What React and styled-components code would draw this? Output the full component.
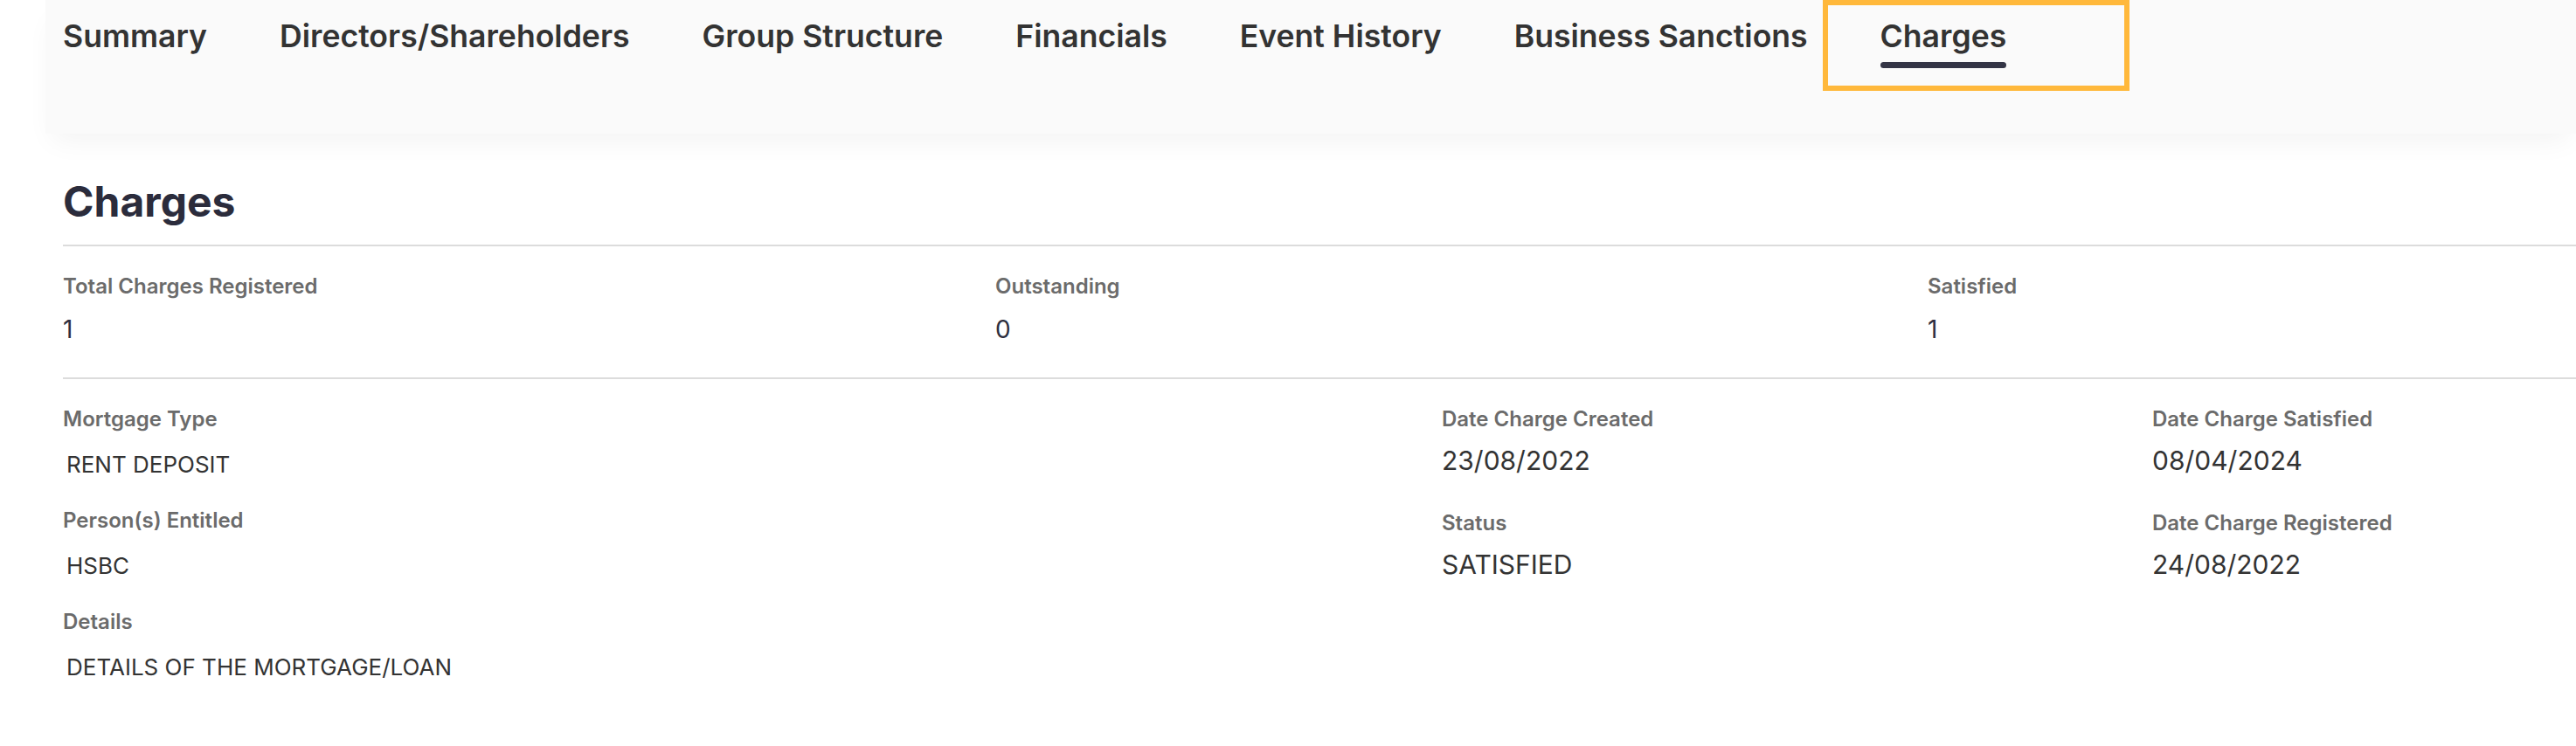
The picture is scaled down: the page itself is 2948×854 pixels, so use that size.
import styled, { createGlobalStyle } from "styled-components";

const GlobalStyle = createGlobalStyle`
    body {
        margin: 0;
        background: #ffffff;
        font-family: Inter, "Noto Sans", sans-serif;
        overflow: hidden;
    }
`;

const tabs = [
    "Summary",
    "Directors/Shareholders",
    "Group Structure",
    "Financials",
    "Event History",
    "Business Sanctions",
    "Charges",
];

const summary = [
    { label: "Total Charges Registered", value: "1" },
    { label: "Outstanding", value: "0" },
    { label: "Satisfied", value: "1" },
];

const detailColumns = [
    {
        wide: true,
        fields: [
            { label: "Mortgage Type", value: "RENT DEPOSIT" },
            { label: "Person(s) Entitled", value: "HSBC" },
            { label: "Details", value: "DETAILS OF THE MORTGAGE/LOAN" },
        ],
    },
    {
        fields: [
            { label: "Date Charge Created", value: "23/08/2022" },
            { label: "Status", value: "SATISFIED" },
        ],
    },
    {
        fields: [
            { label: "Date Charge Satisfied", value: "08/04/2024" },
            { label: "Date Charge Registered", value: "24/08/2022" },
        ],
    },
];

const Page = styled.div`
    margin-left: 52px;
    width: 2896px;
`;

const Header = styled.header`
    height: 153px;
    background: #fafafa;
    box-shadow: 0 16px 30px -8px rgba(0, 0, 0, 0.05);
    padding: 20px 20px 0;
    box-sizing: border-box;
    position: relative;
    z-index: 1;
`;

const TabList = styled.nav`
    display: flex;
    gap: 83px;
`;

const Tab = styled.div`
    position: relative;
    display: flex;
    flex-direction: column;
    font-size: 35.6px;
    line-height: 44px;
    font-weight: 600;
    color: #333333;
    white-space: nowrap;
`;

const Underline = styled.span`
    display: block;
    margin-top: 7px;
    height: 7px;
    border-radius: 4px;
    background: #343546;
`;

const Highlight = styled.span`
    position: absolute;
    left: -66px;
    top: -20px;
    width: 351px;
    height: 104px;
    box-sizing: border-box;
    border: 6px solid #ffb83b;
    pointer-events: none;
`;

const Content = styled.main`
    padding: 49px 0 0 20px;
`;

const Title = styled.h1`
    margin: 0;
    font-size: 48px;
    line-height: 58px;
    font-weight: 700;
    color: #2b2c3c;
`;

const Divider = styled.hr`
    margin: ${({ $top }) => $top || 0}px 0 0;
    border: 0;
    height: 2px;
    background: #dcdcdc;
`;

const SummaryRow = styled.section`
    display: grid;
    grid-template-columns: 1067px 1067px 1fr;
    padding: 31px 0 38px;
`;

const Field = styled.div`
    display: flex;
    flex-direction: column;
    gap: ${({ $gap }) => $gap}px;
`;

const Label = styled.div`
    font-size: 24px;
    line-height: 29px;
    font-weight: 600;
    color: #6b6b6b;
`;

const Value = styled.div`
    font-size: ${({ $size }) => $size}px;
    line-height: ${({ $size }) => Math.round($size * 1.2)}px;
    font-weight: 400;
    color: ${({ $dark }) => ($dark ? "#2e2f40" : "#333333")};
    padding-left: ${({ $indent }) => ($indent ? 4 : 0)}px;
`;

const DetailGrid = styled.section`
    display: grid;
    grid-template-columns: 1578px 813px 1fr;
    padding-top: 31px;
`;

const DetailColumn = styled.div`
    display: flex;
    flex-direction: column;
    gap: ${({ $wide }) => ($wide ? 34 : 39)}px;
`;

const App = () => {
    return (
        <Page>
            <GlobalStyle />
            <Header>
                <TabList>
                    {tabs.map((tab) => (
                        <Tab key={tab}>
                            {tab}
                            {tab === "Charges" && (
                                <>
                                    <Underline />
                                    <Highlight />
                                </>
                            )}
                        </Tab>
                    ))}
                </TabList>
            </Header>

            <Content>
                <Title>Charges</Title>
                <Divider $top={20} />

                <SummaryRow>
                    {summary.map((item) => (
                        <Field key={item.label} $gap={18}>
                            <Label>{item.label}</Label>
                            <Value $size={28} $dark>{item.value}</Value>
                        </Field>
                    ))}
                </SummaryRow>

                <Divider />

                <DetailGrid>
                    {detailColumns.map((col, i) => (
                        <DetailColumn key={i} $wide={col.wide}>
                            {col.fields.map((f) => (
                                <Field key={f.label} $gap={col.wide ? 22 : 15}>
                                    <Label>{f.label}</Label>
                                    <Value $size={col.wide ? 26 : 30} $indent={col.wide}>
                                        {f.value}
                                    </Value>
                                </Field>
                            ))}
                        </DetailColumn>
                    ))}
                </DetailGrid>
            </Content>
        </Page>
    );
};

export default App;
